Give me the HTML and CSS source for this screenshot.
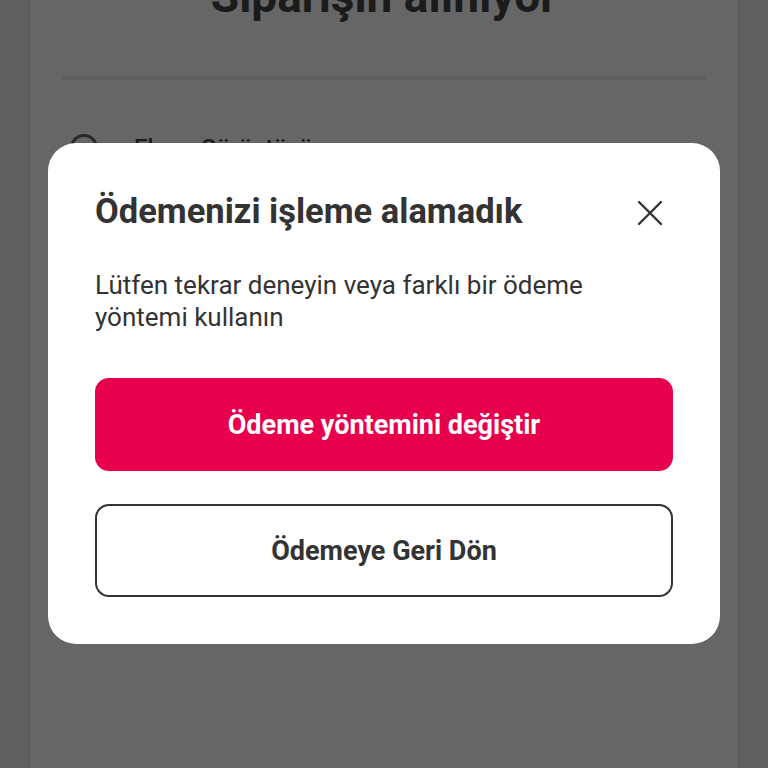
FILE: index.html
```html
<!DOCTYPE html>
<html lang="tr">
<head>
<meta charset="utf-8">
<link rel="stylesheet" href="styles.css">
</head>
<body>
<div class="page">
  <div class="side side-left"></div>
  <div class="content">
    <h1 class="page-title">Siparişin alınıyor</h1>
    <div class="divider"></div>
    <div class="row">
      <span class="radio"></span>
      <span class="row-text">Ekran Görüntüsü</span>
    </div>
  </div>
  <div class="side side-right"></div>
</div>
<div class="overlay"></div>
<div class="modal" role="dialog">
  <div class="modal-head">
    <h2 class="modal-title">Ödemenizi işleme alamadık</h2>
    <button class="close" aria-label="Kapat">
      <svg width="26" height="26" viewBox="0 0 26 26"><path d="M2 2 L24 24 M24 2 L2 24" stroke="#333" stroke-width="2.4" stroke-linecap="round" fill="none"/></svg>
    </button>
  </div>
  <p class="modal-text">Lütfen tekrar deneyin veya farklı bir ödeme yöntemi kullanın</p>
  <div class="actions">
    <button class="btn btn-primary">Ödeme yöntemini değiştir</button>
    <button class="btn btn-secondary">Ödemeye Geri Dön</button>
  </div>
</div>
</body>
</html>
```

FILE: styles.css
```css
* { box-sizing: border-box; }
html, body { margin: 0; padding: 0; }
body {
  width: 768px;
  height: 768px;
  overflow: hidden;
  font-family: Roboto, "Noto Sans", sans-serif;
  background: #ffffff;
  position: relative;
}
.page {
  display: flex;
  height: 768px;
}
.side {
  width: 30px;
  background: #f2f2f2;
  border-right: 2px solid #e6e6e6;
}
.side-right {
  border-right: none;
  border-left: 2px solid #e6e6e6;
}
.content {
  flex: 1;
  padding: 0 32px;
  background: #ffffff;
}
.page-title {
  margin: -34px 0 0;
  text-align: center;
  font-size: 46px;
  font-weight: 700;
  color: #444444;
  line-height: 60px;
}
.divider {
  height: 4px;
  background: #f0f0f0;
  margin-top: 50px;
}
.row {
  display: flex;
  align-items: center;
  gap: 36px;
  margin-top: 54px;
  padding-left: 8px;
}
.radio {
  width: 28px;
  height: 28px;
  border: 3px solid #666;
  border-radius: 50%;
}
.row-text {
  font-size: 24px;
  font-weight: 500;
  color: #444;
}
.overlay {
  position: absolute;
  inset: 0;
  background: rgba(0, 0, 0, 0.6);
}
.modal {
  position: absolute;
  left: 48px;
  top: 143px;
  width: 672px;
  height: 501px;
  background: #ffffff;
  border-radius: 28px;
  padding: 44px 47px 47px;
  display: flex;
  flex-direction: column;
}
.modal-head {
  display: flex;
  align-items: center;
  justify-content: space-between;
}
.modal-title {
  margin: 0;
  font-size: 34.5px;
  font-weight: 700;
  color: #333333;
  line-height: 48px;
}
.close {
  border: none;
  background: none;
  padding: 0;
  width: 26px;
  height: 26px;
  margin-right: 10px;
  margin-top: 4px;
  display: flex;
}
.modal-text {
  margin: 34px 0 0;
  font-size: 26px;
  line-height: 32px;
  color: #333333;
}
.actions {
  margin-top: auto;
  display: flex;
  flex-direction: column;
  gap: 33px;
}
.btn {
  width: 100%;
  height: 93px;
  border-radius: 14px;
  font-family: Roboto, "Noto Sans", sans-serif;
  font-size: 27px;
  font-weight: 700;
}
.btn-primary {
  background: #e8004d;
  color: #ffffff;
  border: none;
}
.btn-secondary {
  background: #ffffff;
  color: #333333;
  border: 2px solid #333333;
}
```
